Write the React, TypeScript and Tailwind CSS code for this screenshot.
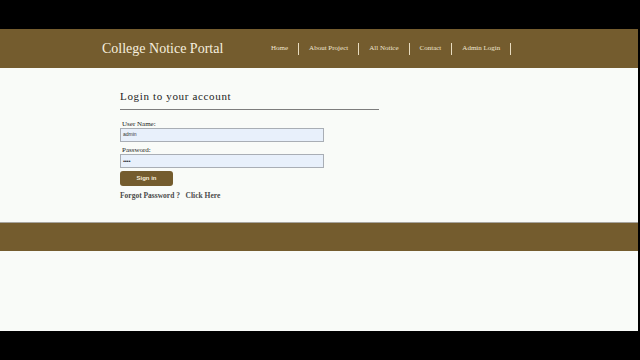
import React from "react";

const navItems = ["Home", "About Project", "All Notice", "Contact", "Admin Login"];

export default function App() {
  return (
    <div className="w-[640px] h-[360px] bg-black flex flex-col overflow-hidden">
      <div className="h-[29px] shrink-0" />

      <div className="w-[638px] h-[302px] bg-[#f9fbf8] flex flex-col font-['Liberation_Serif',serif]">
        <header className="h-[39px] shrink-0 bg-[#745c2e] flex items-center">
          <h1 className="ml-[102px] w-[159px] text-[14px] text-[#f6efdf] leading-none">College Notice Portal</h1>
          <nav className="flex items-center text-[7px] text-[#efe6d2]">
            {navItems.map((item) => (
              <div key={item} className="flex items-center">
                <span className="px-[10px]">{item}</span>
                <span className="w-px h-[12px] bg-[#e8dcc0]" />
              </div>
            ))}
          </nav>
        </header>

        <main className="h-[154px] shrink-0 pl-[120px] pt-[23px]">
          <h2 className="text-[11px] tracking-[0.06em] text-[#1d1d1d] leading-none">Login to your account</h2>
          <div className="mt-[7px] w-[259px] h-px bg-[#7d7d7d]" />

          <form className="mt-[11px] w-[204px] flex flex-col">
            <label className="pl-[2px] text-[7px] text-[#222] leading-none">User Name:</label>
            <div className="h-[14px] bg-[#e8f0fb] border border-[#a9aeb5] flex items-center px-[2px] text-[5px] font-['Liberation_Sans',sans-serif] text-[#333]">
              admin
            </div>
            <label className="mt-[5px] pl-[2px] text-[7px] text-[#222] leading-none">Password:</label>
            <div className="h-[14px] bg-[#e8f0fb] border border-[#a9aeb5] flex items-center px-[2px] text-[6px] font-['Liberation_Sans',sans-serif] text-[#333] tracking-[-0.05em]">
              ••••
            </div>
            <button
              type="button"
              className="mt-[3px] w-[53px] h-[15px] rounded-[3px] bg-[#745c2e] text-[#f4ecda] text-[6px] font-bold font-['Liberation_Sans',sans-serif]"
            >
              Sign in
            </button>
          </form>

          <p className="mt-[6px] text-[7.5px] font-bold text-[#4a4a4a] leading-none">
            Forgot Password ?&nbsp;&nbsp;&nbsp;Click Here
          </p>
        </main>

        <div className="h-px shrink-0 bg-[#a7a49e]" />
        <footer className="h-[28px] shrink-0 bg-[#745c2e]" />
        <div className="flex-1" />
      </div>

      <div className="flex-1" />
    </div>
  );
}
